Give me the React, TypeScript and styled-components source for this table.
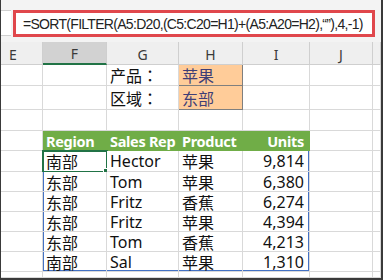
import styled, { createGlobalStyle } from 'styled-components';
import { FC, ReactNode } from "react";

const GlobalStyle = createGlobalStyle`
  html, body { margin: 0; padding: 0; background: #ffffff; }
  body { font-family: "Noto Sans", "Noto Sans CJK SC", sans-serif; }
`;

const COLS = [42, 64, 72, 64, 67, 63, 8];
const ROWS = [23, 21, 24, 21, 20, 21, 20, 20, 20, 20, 20, 6];

const Frame = styled.div`
  width: 383px;
  height: 280px;
  box-sizing: border-box;
  border-left: 1px solid #3a3a3a;
  border-right: 2px solid #3a3a3a;
  border-bottom: 2px solid #3a3a3a;
  background: #ffffff;
  overflow: hidden;
`;

const FormulaBar = styled.div`
  height: 42px;
  background: #f3f3f3;
  display: flex;
  align-items: flex-start;
  padding-top: 10px;
  box-sizing: border-box;
  gap: 2px;
`;

const NameBox = styled.div`
  width: 10px;
  height: 26px;
  background: #ffffff;
  border-top: 1px solid #d0d0d0;
  border-bottom: 1px solid #d0d0d0;
  box-sizing: border-box;
`;

const FormulaBox = styled.div`
  width: 362px;
  height: 27px;
  box-sizing: border-box;
  border: 3px solid #e0474c;
  background: #ffffff;
  display: flex;
  align-items: center;
  padding-left: 7px;
  font-family: "Liberation Sans", sans-serif;
  font-size: 14px;
  letter-spacing: -0.7px;
  color: #222222;
  white-space: nowrap;
`;

const Sheet = styled.div`
  display: grid;
  grid-template-columns: ${COLS.map(c => c + 'px').join(' ')};
  grid-template-rows: ${ROWS.map(r => r + 'px').join(' ')};
`;

const ColHead = styled.div<{ $active?: boolean; $pad?: number }>`
  box-sizing: border-box;
  background: ${p => p.$active ? '#d2d2d2' : '#efefef'};
  border-right: 1px solid #cfcfcf;
  border-bottom: ${p => p.$active ? '2px solid #217346' : '1px solid #cfcfcf'};
  display: flex;
  align-items: center;
  justify-content: ${p => p.$pad !== undefined ? 'flex-start' : 'center'};
  padding-left: ${p => p.$pad ?? 0}px;
  padding-top: 2px;
  font-family: "Noto Sans", sans-serif;
  font-size: 14px;
  color: #3a3a3a;
`;

type Edge = { l?: boolean; r?: boolean; b?: boolean };

const Cell = styled.div<{
  $bg?: string;
  $line?: string;
  $align?: 'left' | 'right';
  $head?: boolean;
  $color?: string;
  $label?: boolean;
  $edge?: Edge;
}>`
  position: relative;
  box-sizing: border-box;
  background: ${p => p.$bg ?? '#ffffff'};
  border-right: 1px solid ${p => p.$line ?? '#d9d9d9'};
  border-bottom: 1px solid ${p => p.$line ?? '#d9d9d9'};
  ${p => {
    const e = p.$edge;
    if (!e) return '';
    const s: string[] = [];
    if (e.l) s.push('inset 1px 0 0 #4472c4');
    if (e.r) s.push('inset -1px 0 0 #4472c4');
    if (e.b) s.push('inset 0 -1px 0 #4472c4');
    return s.length ? `box-shadow: ${s.join(', ')};` : '';
  }}
  display: flex;
  align-items: center;
  justify-content: ${p => p.$align === 'right' ? 'flex-end' : 'flex-start'};
  padding: 0 ${p => p.$align === 'right' ? 5 : 3}px 0 3px;
  font-family: ${p => p.$label
    ? '"Noto Sans CJK TC", sans-serif'
    : '"Noto Sans", "Noto Sans CJK SC", sans-serif'};
  font-size: ${p => p.$head ? 14.5 : 16}px;
  font-weight: ${p => p.$head ? 700 : 400};
  letter-spacing: ${p => p.$head ? '-0.3px' : '0'};
  color: ${p => p.$color ?? '#111111'};
  white-space: nowrap;
`;

const Selection = styled.div`
  position: absolute;
  left: -1px;
  top: -1px;
  right: -2px;
  bottom: -2px;
  border: 2px solid #217346;
  pointer-events: none;
`;

const FillHandle = styled.div`
  position: absolute;
  right: -4px;
  bottom: -4px;
  width: 5px;
  height: 5px;
  background: #217346;
  border: 1px solid #ffffff;
`;

const GREEN = '#70ad47';

const data: [string, string, string, string][] = [
  ['南部', 'Hector', '苹果', '9,814'],
  ['东部', 'Tom', '苹果', '6,380'],
  ['东部', 'Fritz', '香蕉', '6,274'],
  ['东部', 'Fritz', '苹果', '4,394'],
  ['东部', 'Tom', '香蕉', '4,213'],
  ['南部', 'Sal', '苹果', '1,310'],
];

const Blank: FC = () => <Cell />;

const Row: FC<{ children: ReactNode }> = ({ children }) => (
  <>
    <Blank />
    {children}
    <Blank />
    <Blank />
  </>
);

export default function App() {
  return (
    <>
      <GlobalStyle />
      <Frame>
        <FormulaBar>
          <NameBox />
          <FormulaBox>=SORT(FILTER(A5:D20,(C5:C20=H1)+(A5:A20=H2),“”),4,-1)</FormulaBox>
        </FormulaBar>
        <Sheet>
          <ColHead $pad={8}>E</ColHead>
          <ColHead $active>F</ColHead>
          <ColHead>G</ColHead>
          <ColHead>H</ColHead>
          <ColHead>I</ColHead>
          <ColHead>J</ColHead>
          <ColHead />

          <Row>
            <Blank />
            <Cell $label>产品：</Cell>
            <Cell $bg="#ffcc99" $color="#3f3f76" $line="#7f7f7f">苹果</Cell>
            <Blank />
          </Row>
          <Row>
            <Blank />
            <Cell $label>区域：</Cell>
            <Cell $bg="#ffcc99" $color="#3f3f76" $line="#7f7f7f">东部</Cell>
            <Blank />
          </Row>
          <Row>
            <Blank />
            <Blank />
            <Blank />
            <Blank />
          </Row>
          <Row>
            <Cell $bg={GREEN} $line={GREEN} $head $color="#ffffff">Region</Cell>
            <Cell $bg={GREEN} $line={GREEN} $head $color="#ffffff">Sales Rep</Cell>
            <Cell $bg={GREEN} $line={GREEN} $head $color="#ffffff">Product</Cell>
            <Cell $bg={GREEN} $line={GREEN} $head $color="#ffffff" $align="right">Units</Cell>
          </Row>
          {data.map((r, i) => {
            const last = i === data.length - 1;
            return (
              <Row key={i}>
                <Cell $edge={{ l: true, b: last }}>
                  {r[0]}
                  {i === 0 && (
                    <Selection>
                      <FillHandle />
                    </Selection>
                  )}
                </Cell>
                <Cell $edge={{ b: last }}>{r[1]}</Cell>
                <Cell $edge={{ b: last }}>{r[2]}</Cell>
                <Cell $align="right" $edge={{ r: true, b: last }}>{r[3]}</Cell>
              </Row>
            );
          })}
          <Row>
            <Blank />
            <Blank />
            <Blank />
            <Blank />
          </Row>
        </Sheet>
      </Frame>
    </>
  );
}
